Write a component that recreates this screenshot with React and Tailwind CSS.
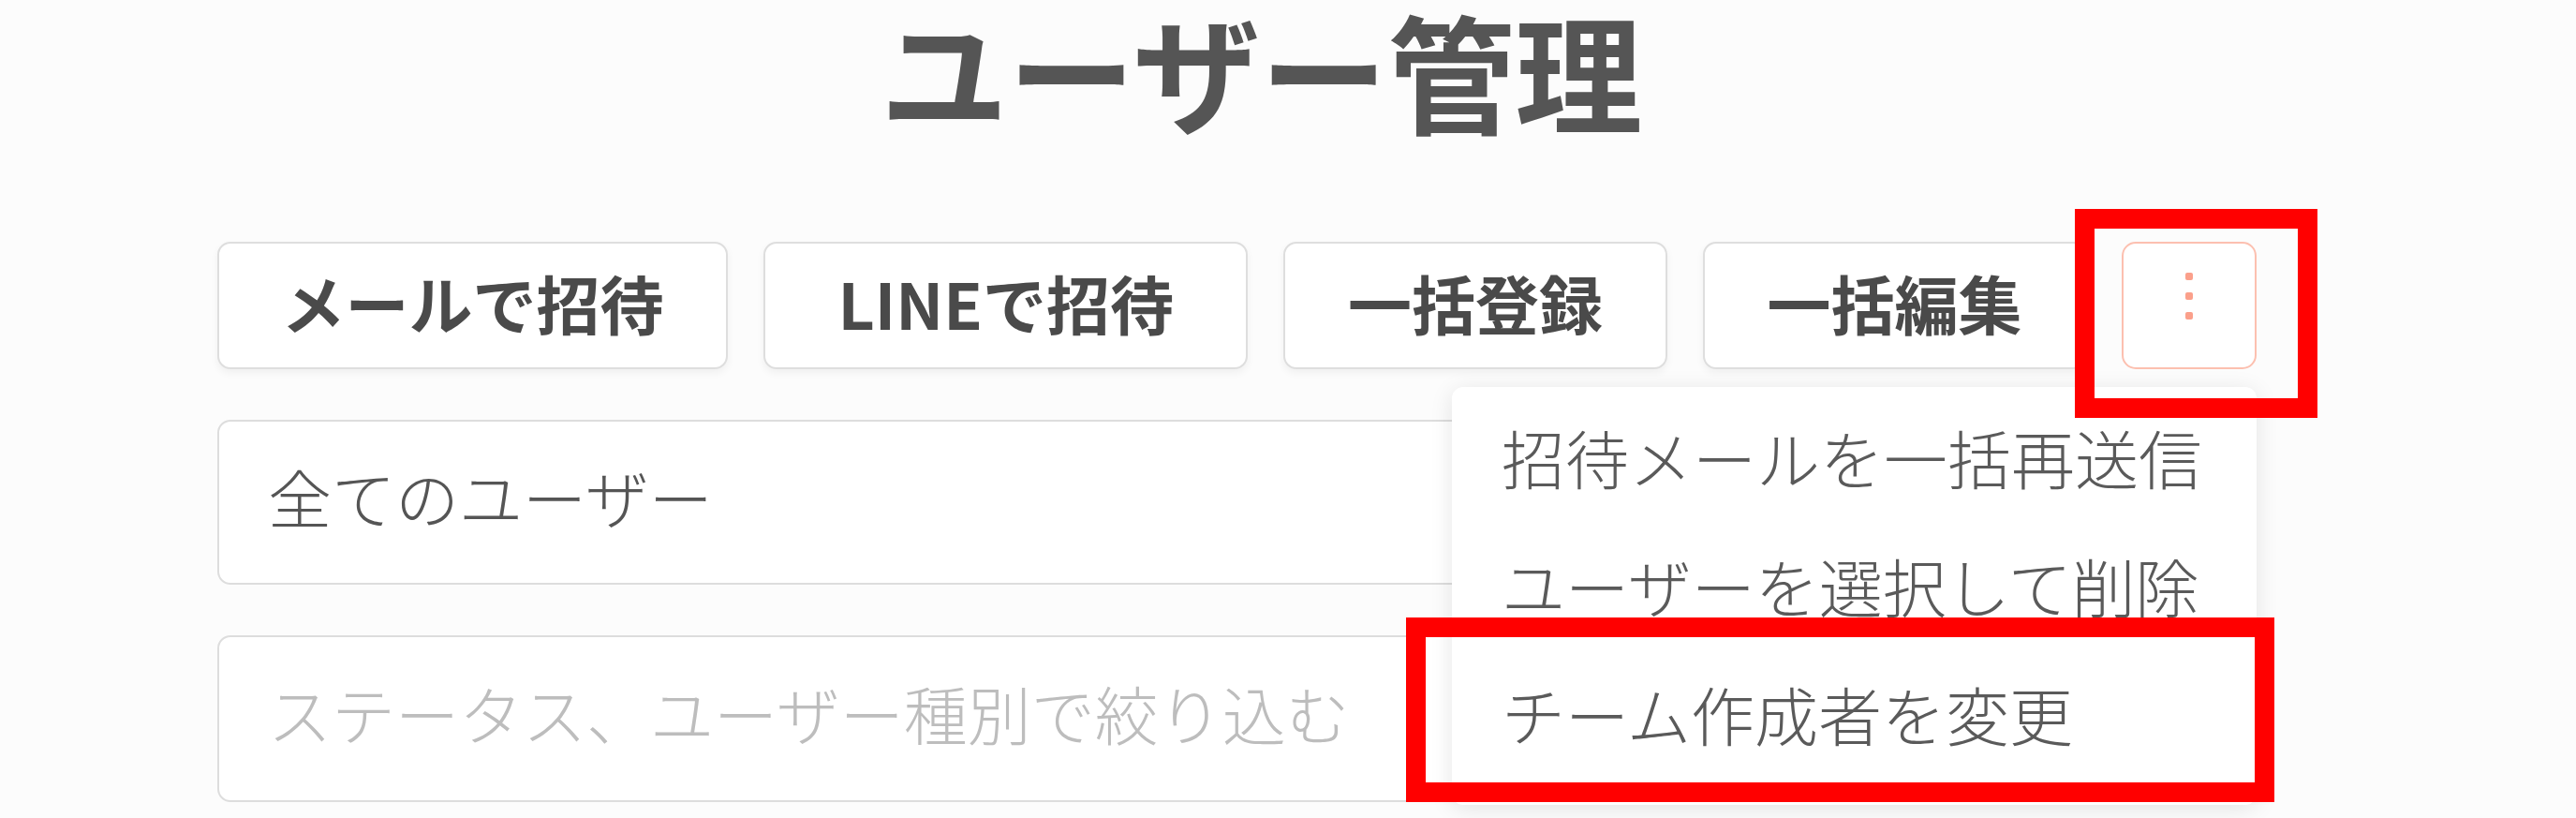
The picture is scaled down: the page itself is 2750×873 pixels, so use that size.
const ACTIONS = [
  { label: "メールで招待", width: "w-[546px]" },
  { label: "LINEで招待",   width: "w-[518px]" },
  { label: "一括登録",     width: "w-[410px]" },
  { label: "一括編集",     width: "w-[410px]" },
];

const MENU_ITEMS = ["招待メールを一括再送信", "ユーザーを選択して削除", "チーム作成者を変更"];

const Dots = () => (
  <div className="flex flex-col items-center gap-[13px] pb-[20px]">
    <span className="block w-[8px] h-[8px] rounded-[2px] bg-[#fba08b]" />
    <span className="block w-[8px] h-[8px] rounded-[2px] bg-[#fba08b]" />
    <span className="block w-[8px] h-[8px] rounded-[2px] bg-[#fba08b]" />
  </div>
);

const App = () => {
  return (
    <div className="relative w-full h-[873px] overflow-hidden bg-[#fcfcfc] font-['Noto_Sans_CJK_JP','Noto_Sans',sans-serif]">

      <div className="ml-[232px] w-[2177px]">

        {/* Title */}
        <h1 className="pl-[708px] text-[136px] leading-[148px] font-bold text-[#555555] whitespace-nowrap">
          ユーザー管理
        </h1>

        {/* Action buttons */}
        <div className="flex items-center gap-[38px] mt-[110px]">
          {ACTIONS.map((a) => (
            <button key={a.label}
              className={`${a.width} h-[136px] flex items-center justify-center pb-[6px] bg-white border-2 border-[#dedede] rounded-[14px] shadow-[0_4px_8px_rgba(0,0,0,0.05)] text-[68px] font-bold text-[#4a4a4a] whitespace-nowrap`}>
              {a.label}
            </button>
          ))}
          <button className="w-[144px] h-[136px] flex items-center justify-center bg-white border-2 border-[#fcc0b0] rounded-[15px]">
            <Dots />
          </button>
        </div>

        {/* Filters */}
        <div className="flex flex-col gap-[54px] mt-[54px]">
          <div className="h-[176px] flex items-center pl-[52px] pb-[12px] bg-white border-2 border-[#dddddd] rounded-[14px] text-[68px] font-light text-[#555555] whitespace-nowrap">
            全てのユーザー
          </div>
          <div className="h-[178px] flex items-center pl-[52px] pb-[12px] bg-white border-2 border-[#dddddd] rounded-[14px] text-[68px] font-light text-[#bdbdbd] whitespace-nowrap">
            ステータス、ユーザー種別で絞り込む
          </div>
        </div>
      </div>

      {/* Dropdown menu */}
      <div className="absolute left-[1550px] top-[413px] w-[859px] h-[446px] pt-[8px] bg-white rounded-[12px] shadow-[0_4px_24px_rgba(0,0,0,0.10)]">
        {MENU_ITEMS.map((item) => (
          <div key={item} className="h-[137px] flex items-center pl-[53px] pb-[4px] text-[68px] font-light text-[#5a5a5a] whitespace-nowrap">
            {item}
          </div>
        ))}
      </div>

      {/* Annotation boxes */}
      <div className="absolute left-[2215px] top-[223px] w-[259px] h-[223px] border-[21px] border-[#ff0000]" />
      <div className="absolute left-[1501px] top-[659px] w-[927px] h-[197px] border-[21px] border-[#ff0000]" />
    </div>
  );
};

export default App;
